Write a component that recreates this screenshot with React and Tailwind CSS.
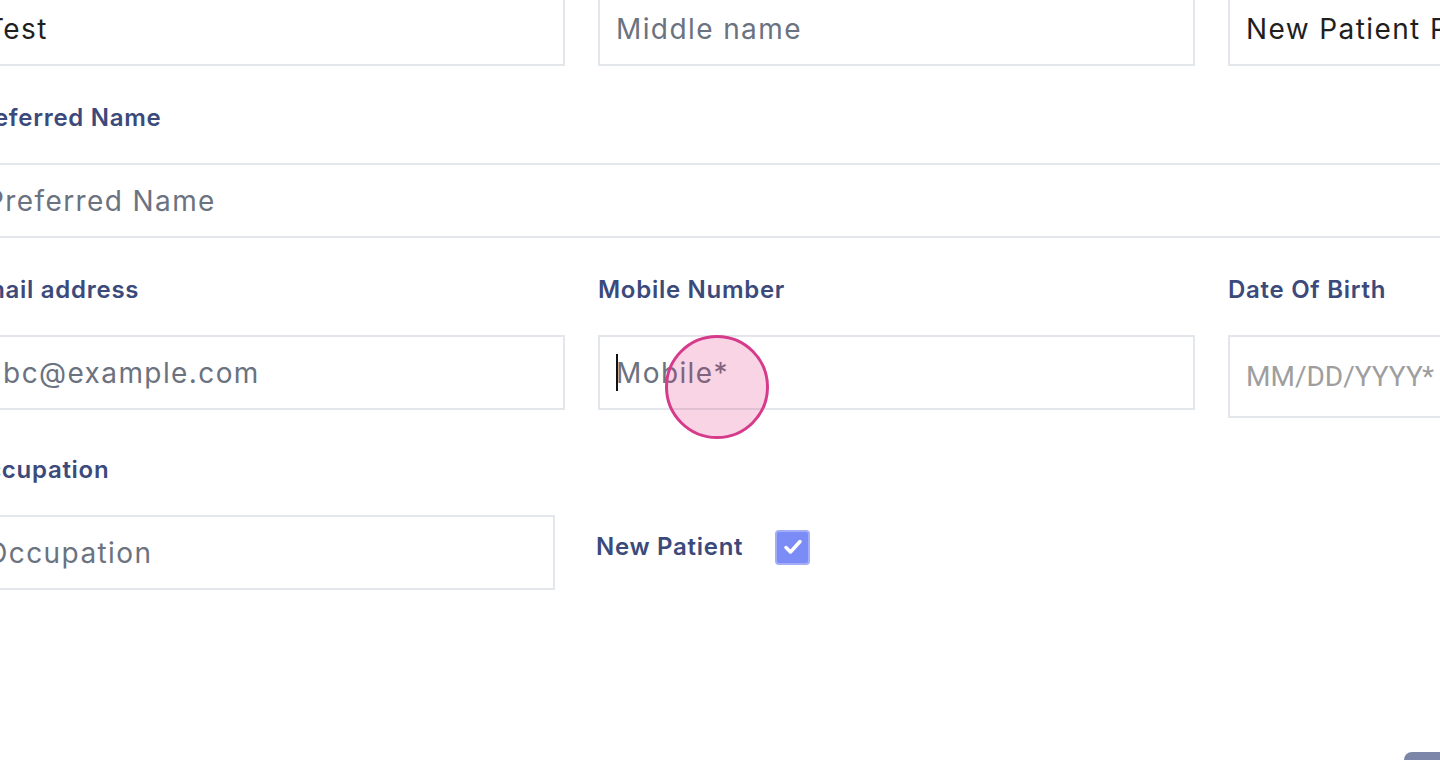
import React from "react";

const font = { fontFamily: "Inter, 'Noto Sans', sans-serif" };

function Label({ children, className = "" }) {
    return (
        <label className={"block h-[30px] leading-[30px] text-[24px] tracking-[0.03em] font-semibold text-[#3b4a7b] " + className}>
            {children}
        </label>
    );
}

function Field({ placeholder, value, className = "" }) {
    return (
        <input
            readOnly
            defaultValue={value}
            placeholder={placeholder}
            className={"block h-[75px] w-full border-2 border-[#e3e6eb] bg-white px-[16px] text-[28px] tracking-[0.05em] text-[#1f1f1f] placeholder:text-[#6b7280] outline-none " + className}
        />
    );
}

export default function App() {
    return (
        <div className="h-[760px] w-[1440px] overflow-hidden bg-white" style={font}>
            <div className="ml-[-32px] mt-[-9px] w-[1857px]">
                {/* name row */}
                <div className="grid grid-cols-3 gap-x-[33px]">
                    <Field value="Test" />
                    <Field placeholder="Middle name" />
                    <Field value="New Patient Record" />
                </div>

                {/* preferred name */}
                <div className="mt-[37px]">
                    <Label>Preferred Name</Label>
                    <div className="mt-[30px]">
                        <Field placeholder="Preferred Name" />
                    </div>
                </div>

                {/* contact row */}
                <div className="mt-[37px] grid grid-cols-3 items-start gap-x-[33px]">
                    <div>
                        <Label>Email address</Label>
                        <div className="mt-[30px]">
                            <Field placeholder="abc@example.com" />
                        </div>
                    </div>
                    <div>
                        <Label>Mobile Number</Label>
                        <div className="relative mt-[30px]">
                            <Field placeholder="Mobile*" />
                            <span className="absolute left-[18px] top-[19px] h-[37px] w-[2px] bg-[#111]" />
                            <span className="absolute left-[67px] top-[0px] h-[104px] w-[104px] rounded-full border-[3px] border-[#d63b8b] bg-[#db2777]/20" />
                        </div>
                    </div>
                    <div>
                        <Label>Date Of Birth</Label>
                        <div className="mt-[30px]">
                            <input
                                readOnly
                                placeholder="MM/DD/YYYY*"
                                className="block h-[83px] w-full border-2 border-[#e3e6eb] bg-white px-[16px] text-[28px] placeholder:text-[#9e9e9e] outline-none"
                                style={{ fontFamily: "Roboto, sans-serif" }}
                            />
                        </div>
                    </div>
                </div>

                {/* occupation row */}
                <div className="mt-[37px] grid grid-cols-3 gap-x-[33px]">
                    <div>
                        <Label>Occupation</Label>
                        <div className="mt-[30px] w-[587px]">
                            <Field placeholder="Occupation" />
                        </div>
                    </div>
                    <div className="flex items-center gap-[32px] pb-[25px] self-end ml-[-2px]">
                        <span className="text-[24px] tracking-[0.03em] font-semibold text-[#3b4a7b]">New Patient</span>
                        <span className="flex h-[35px] w-[35px] items-center justify-center rounded-[4px] border-2 border-[#a3aef7] bg-[#7b8cf7]">
                            <svg width="24" height="24" viewBox="0 0 24 24" fill="none" stroke="white" strokeWidth="3.5" strokeLinecap="round" strokeLinejoin="round">
                                <path d="M5 12.5l4.5 4.5L19 6.5" />
                            </svg>
                        </span>
                    </div>
                </div>

                {/* footer button */}
                <div className="mt-[162px] flex">
                    <button className="ml-[1436px] h-[48px] w-[240px] rounded-[8px] bg-[#7c86a8] text-white" />
                </div>
            </div>
        </div>
    );
}
